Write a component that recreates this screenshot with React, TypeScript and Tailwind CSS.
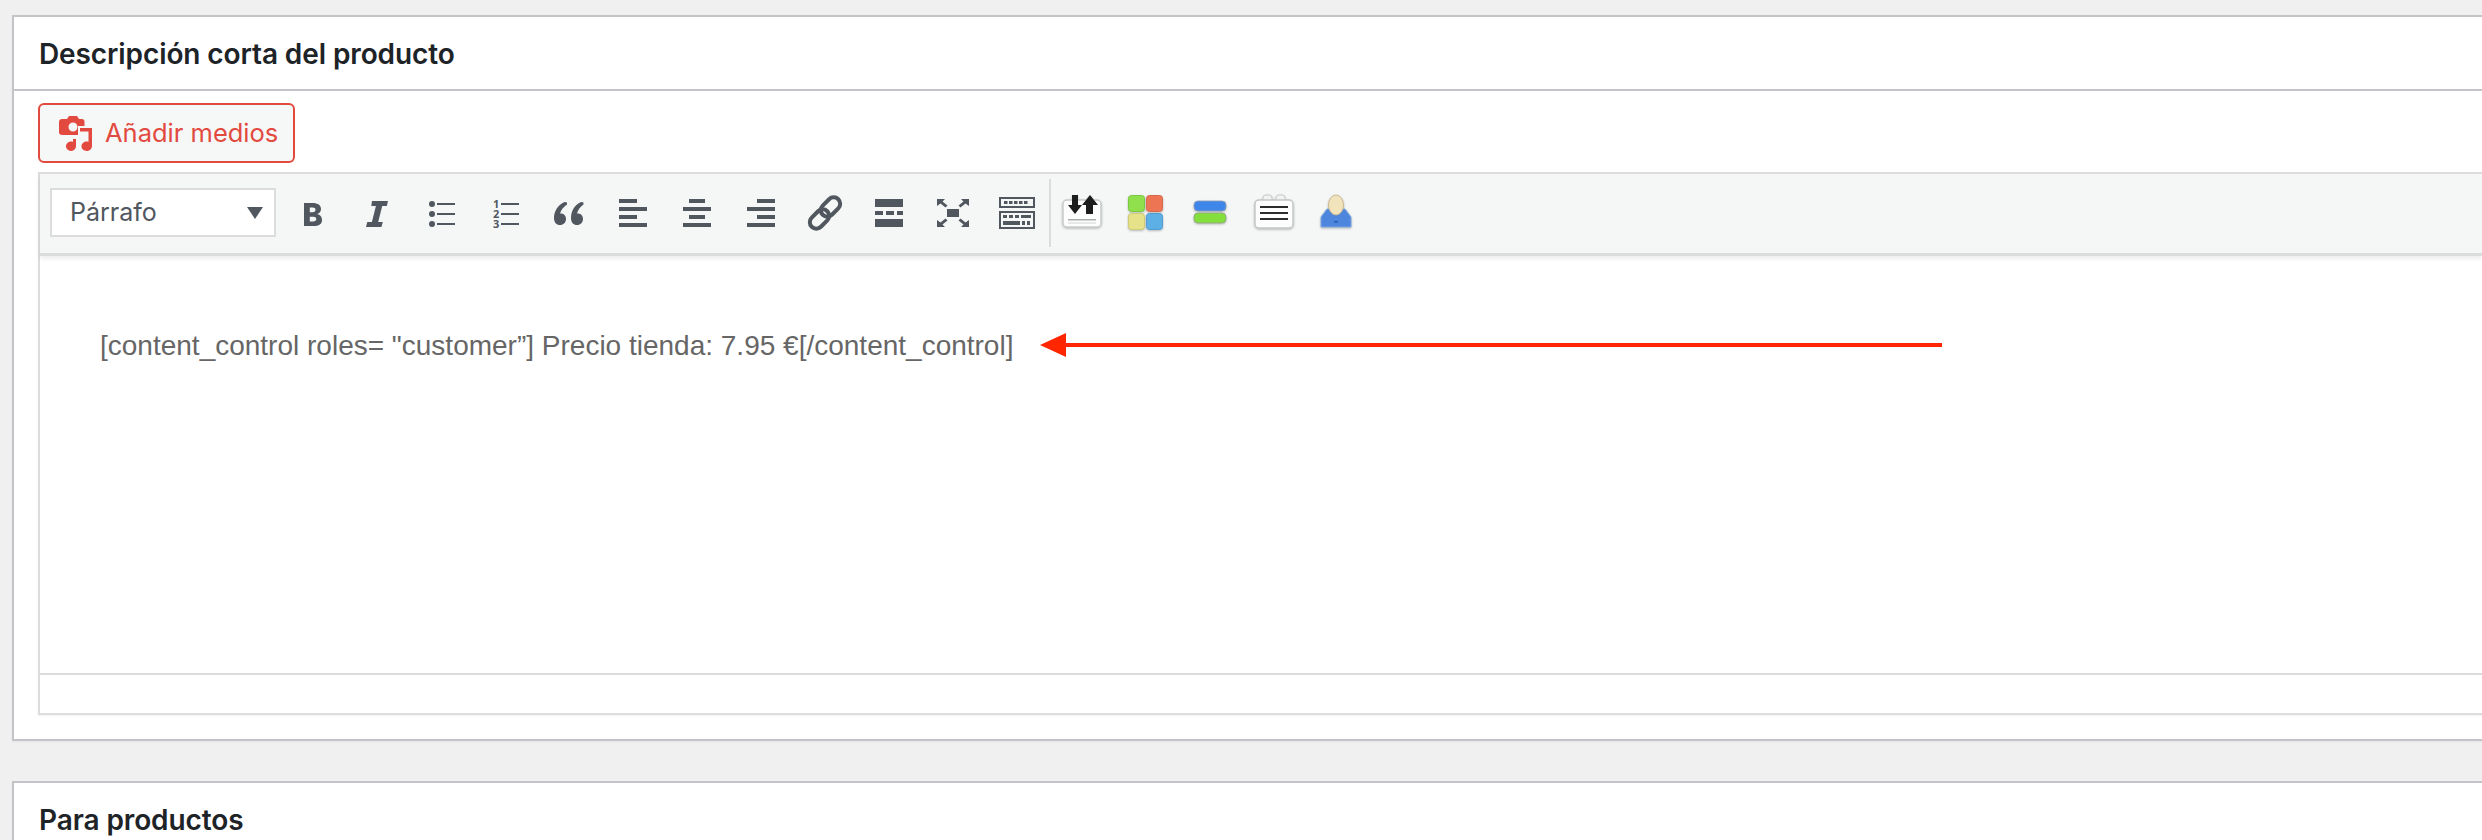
import React from 'react';

const ink = '#50575e';

function Bars({ rows }: { rows: [number, number][] }) {
  return (
    <svg width="40" height="40" viewBox="0 0 40 40" fill={ink}>
      {rows.map(([x, w], i) => (
        <rect key={i} x={x} y={6 + i * 8} width={w} height="4" />
      ))}
    </svg>
  );
}

function ToolButton({ children }: { children: React.ReactNode }) {
  return <div className="w-16 h-10 flex items-center justify-center shrink-0">{children}</div>;
}

function MediaIcon() {
  return (
    <svg width="34" height="36" viewBox="0 0 34 36" fill="#e24a3f">
      <path
        fillRule="evenodd"
        d="M3 4h5l2-3h8l2 3h3c1.500 0 2.500 1 2.500 2.500V11H19v9H3c-1.500 0-3-1-3-2.500V7c0-1.700 1.300-3 3-3zm11 3.500a4.500 4.500 0 1 0 0 9 4.500 4.500 0 0 0 0-9z"
      />
      <path d="M21 13h12v18c0 2.800-2.300 5-5.200 5-2.900 0-5.300-2-5.300-4.700s2.400-4.800 5.300-4.800c.7 0 1.200.1 1.700.3V16.500H21z" />
      <path d="M14 24h3v7c0 2.800-2.200 5-5 5s-5-2.200-5-4.700 2.200-4.800 5-4.800c.7 0 1.400.1 2 .4z" />
    </svg>
  );
}

function BoldIcon() {
  return (
    <svg width="40" height="40" viewBox="0 0 40 40" fill={ink}>
      <path
        fillRule="evenodd"
        d="M11 10h8.500c5.500 0 8.500 2.300 8.500 6 0 2.600-1.400 4.400-3.800 5.100 3 .6 4.800 2.800 4.800 5.900 0 4-3 6-8.500 6H11zm5.800 4.500v4.800h2.700c2 0 3-.9 3-2.500 0-1.500-1-2.300-3-2.300zm0 9.200v4.800h3.200c2.200 0 3.300-.8 3.300-2.400 0-1.600-1.100-2.400-3.300-2.400z"
      />
    </svg>
  );
}

function ItalicIcon() {
  return (
    <svg width="40" height="40" viewBox="0 0 40 40" fill={ink}>
      <path d="M15 8h16l-1.200 5h-4.600l-4 16h4.600L24.400 34H9l1.300-5h4.600l4-16h-4.600z" />
    </svg>
  );
}

function BulletIcon() {
  return (
    <svg width="40" height="40" viewBox="0 0 40 40" fill={ink}>
      {[11, 21, 31].map((y) => (
        <g key={y}>
          <circle cx="11" cy={y} r="3" />
          <rect x="16" y={y - 1} width="18" height="2" />
        </g>
      ))}
    </svg>
  );
}

function NumberedIcon() {
  return (
    <svg width="40" height="40" viewBox="0 0 40 40" fill={ink}>
      {[11, 21, 31].map((y, i) => (
        <g key={y}>
          <text x="8" y={y + 4} fontSize="11" fontWeight="700" fontFamily="'Open Sans', sans-serif">
            {i + 1}
          </text>
          <rect x="16" y={y - 1} width="18" height="2" />
        </g>
      ))}
    </svg>
  );
}

function QuoteIcon() {
  return (
    <svg width="40" height="40" viewBox="0 0 40 40" fill={ink}>
      <path d="M18 9.500 15.500 9C9 12 5 18 5 25c0 4.500 2.500 7 6 7s6-2.600 6-6-2.300-5.500-5-5.500c-.4 0-.7 0-1 .1 1-3.700 3.500-6.600 7-9.100z" />
      <path d="M34.500 9.500 32 9c-6.500 3-10 9-10 16 0 4.500 2.500 7 6 7s6-2.600 6-6-2.300-5.500-5-5.500c-.4 0-.7 0-1 .1 1-3.700 3-6.600 6.500-9.100z" />
    </svg>
  );
}

function LinkIcon() {
  return (
    <svg width="40" height="40" viewBox="0 0 40 40" fill="none" stroke={ink} strokeWidth="4">
      <rect x="19" y="3" width="13" height="22" rx="6.500" transform="rotate(45 25.500 14)" />
      <rect x="8" y="15" width="13" height="22" rx="6.500" transform="rotate(45 14.500 26)" />
    </svg>
  );
}

function BreakIcon() {
  return (
    <svg width="40" height="40" viewBox="0 0 40 40" fill={ink}>
      <rect x="6" y="6" width="28" height="8" />
      <rect x="6" y="18" width="8" height="4" />
      <rect x="17" y="18" width="8" height="4" />
      <rect x="28" y="18" width="6" height="4" />
      <rect x="6" y="26" width="28" height="8" />
    </svg>
  );
}

function FullscreenIcon() {
  return (
    <svg width="40" height="40" viewBox="0 0 40 40" fill={ink}>
      <rect x="14" y="16" width="12" height="8" />
      <path d="M4 6h8l-2.500 2.500 5 4-2 2-5-4L4 13zM36 6h-8l2.500 2.500-5 4 2 2 5-4L36 13zM4 34h8l-2.500-2.500 5-4-2-2-5 4L4 27zM36 34h-8l2.500-2.500-5-4 2-2 5 4L36 27z" />
    </svg>
  );
}

function KeyboardIcon() {
  return (
    <svg width="40" height="40" viewBox="0 0 40 40" fill={ink}>
      <path fillRule="evenodd" d="M2 4h36v11H2zm2 2v7h32V6zM2 18h36v18H2zm2 2v14h32V20z" />
      {[7, 12, 17, 22, 27].map((x) => (
        <rect key={x} x={x} y="8" width="3.500" height="3" />
      ))}
      {[6, 12, 18, 24, 30].map((x) => (
        <rect key={x} x={x} y="22" width={x === 24 ? 9 : 4} height="3" />
      ))}
      <rect x="6" y="28" width="17" height="4" />
      <rect x="25" y="28" width="3" height="4" />
      <rect x="30" y="28" width="3" height="4" />
    </svg>
  );
}

function TransferIcon() {
  return (
    <svg className="drop-shadow-[0_1px_1px_rgba(0,0,0,0.25)]" width="44" height="40" viewBox="0 0 44 40">
      <rect x="3" y="7" width="38" height="27" rx="4" fill="#fdfdfd" stroke="#c9cccc" strokeWidth="1.500" />
      <rect x="8" y="26" width="28" height="1.500" fill="#a9adad" />
      <rect x="8" y="29.500" width="28" height="1" fill="#d0d3d3" />
      <path d="M12 2h6v10h4l-7 9-7-9h4z" fill="#1d1d1d" />
      <path d="M26 12h-4l8-10 8 10h-5v9h-7z" fill="#1d1d1d" />
    </svg>
  );
}

function GridIcon() {
  return (
    <svg className="drop-shadow-[0_1px_1px_rgba(0,0,0,0.25)]" width="44" height="40" viewBox="0 0 44 40">
      <rect x="4.500" y="2.500" width="16" height="16" rx="3" fill="#8fe04c" stroke="#7cc740" />
      <rect x="22.500" y="2.500" width="16" height="16" rx="3" fill="#ee7553" stroke="#d9694a" />
      <rect x="4.500" y="20.500" width="16" height="16" rx="3" fill="#e6e28a" stroke="#cfca74" />
      <rect x="22.500" y="20.500" width="16" height="16" rx="3" fill="#5cb0e6" stroke="#4f9dd2" />
    </svg>
  );
}

function RowsIcon() {
  return (
    <svg className="drop-shadow-[0_1px_1px_rgba(0,0,0,0.25)]" width="44" height="40" viewBox="0 0 44 40">
      <rect x="6" y="8" width="32" height="10" rx="4" fill="#3f86ea" stroke="#8f9fb5" strokeWidth="0.800" />
      <rect x="6" y="20" width="32" height="10" rx="4" fill="#84de3c" stroke="#8fa57f" strokeWidth="0.800" />
    </svg>
  );
}

function NoteIcon() {
  return (
    <svg className="drop-shadow-[0_1px_1px_rgba(0,0,0,0.25)]" width="44" height="40" viewBox="0 0 44 40">
      <rect x="11" y="2" width="9" height="8" rx="3" fill="#f2f2f2" stroke="#c9cccc" />
      <rect x="24" y="2" width="9" height="8" rx="3" fill="#f2f2f2" stroke="#c9cccc" />
      <rect x="3" y="7" width="38" height="28" rx="4" fill="#fdfdfd" stroke="#c4c7c7" strokeWidth="1.500" />
      <rect x="8" y="13" width="28" height="2" fill="#2c2c2c" />
      <rect x="8" y="19" width="28" height="2" fill="#2c2c2c" />
      <rect x="8" y="25" width="28" height="2" fill="#2c2c2c" />
    </svg>
  );
}

function PersonIcon() {
  return (
    <svg className="drop-shadow-[0_1px_1px_rgba(0,0,0,0.25)]" width="44" height="40" viewBox="0 0 44 40">
      <path d="M11 16h18l6 8v10H5V24z" fill="#4d86dc" stroke="#7ea6e0" />
      <rect x="18" y="28" width="4" height="1.500" fill="#2b5da8" />
      <ellipse cx="20" cy="12" rx="7.500" ry="10" fill="#f1e4bd" stroke="#c9b98c" />
    </svg>
  );
}

function PostBox({ title, children }: { title: string; children?: React.ReactNode }) {
  return (
    <section className="bg-white border-2 border-r-0 border-[#c3c4c7] shadow-[0_1px_2px_rgba(0,0,0,0.05)]">
      <h2 className="h-[72px] flex items-center pl-[25px] pt-[2px] text-[28px] font-semibold text-[#1d2327] tracking-[-0.1px]">
        {title}
      </h2>
      {children}
    </section>
  );
}

export default function App() {
  return (
    <div className="w-[2482px] h-[840px] overflow-hidden bg-[#f0f0f0] pt-[15px] pl-[12px] font-['Inter',sans-serif]">
      <PostBox title="Descripción corta del producto">
        <div className="border-t-2 border-[#c3c4c7] pt-3 pl-6 pb-6">
          <button className="h-[60px] w-[257px] flex items-center gap-[12px] pl-[19px] bg-[#f6f7f7] border-2 border-[#e24a3f] rounded-md text-[25.5px] text-[#e24a3f]">
            <MediaIcon />
            Añadir medios
          </button>
          <div className="mt-[9px] border-t-2 border-l-2 border-b-2 border-[#dcdcde] shadow-[0_1px_2px_rgba(0,0,0,0.05)]">
            <div className="h-[82px] pb-[1px] flex items-center bg-[#f5f7f7] border-b-[3px] border-[#dcdcde] shadow-[0_3px_4px_rgba(0,0,0,0.07)] relative">
              <div className="ml-[10px] w-[226px] h-[49px] mb-[1px] shrink-0 mr-[5px] flex items-center justify-between pl-[18px] pr-[11px] bg-white border-2 border-[#dcdcde] text-[25px] text-[#50575e]">
                Párrafo
                <span className="w-0 h-0 border-x-[8px] border-x-transparent border-t-[12px] border-t-[#50575e]" />
              </div>
              <ToolButton><BoldIcon /></ToolButton>
              <ToolButton><ItalicIcon /></ToolButton>
              <ToolButton><BulletIcon /></ToolButton>
              <ToolButton><NumberedIcon /></ToolButton>
              <ToolButton><QuoteIcon /></ToolButton>
              <ToolButton><Bars rows={[[6, 18], [6, 28], [6, 18], [6, 28]]} /></ToolButton>
              <ToolButton><Bars rows={[[12, 16], [6, 28], [12, 16], [6, 28]]} /></ToolButton>
              <ToolButton><Bars rows={[[16, 18], [6, 28], [16, 18], [6, 28]]} /></ToolButton>
              <ToolButton><LinkIcon /></ToolButton>
              <ToolButton><BreakIcon /></ToolButton>
              <ToolButton><FullscreenIcon /></ToolButton>
              <ToolButton><KeyboardIcon /></ToolButton>
              <div className="w-[2px] h-[68px] mr-[-1px] bg-[#dcdcde] shrink-0" />
              <ToolButton><TransferIcon /></ToolButton>
              <ToolButton><GridIcon /></ToolButton>
              <ToolButton><RowsIcon /></ToolButton>
              <ToolButton><NoteIcon /></ToolButton>
              <ToolButton><PersonIcon /></ToolButton>
            </div>
            <div className="h-[419px] bg-white border-b-2 border-[#dcdcde] pt-[74px] pl-[60px] flex items-start">
              <p className="text-[28px] leading-[32px] text-[#666666] font-['Liberation_Sans',sans-serif] whitespace-nowrap">
                [content_control roles= "customer”] Precio tienda: 7.95 €[/content_control]
              </p>
              <svg className="ml-[27px] shrink-0" width="902" height="30" viewBox="0 0 902 30" fill="#ff2600">
                <path d="M0 15 26 3v10h876v4H26v10z" />
              </svg>
            </div>
            <div className="h-[38px] bg-white" />
          </div>
        </div>
      </PostBox>
      <div className="mt-[40px]">
        <PostBox title="Para productos" />
      </div>
    </div>
  );
}
